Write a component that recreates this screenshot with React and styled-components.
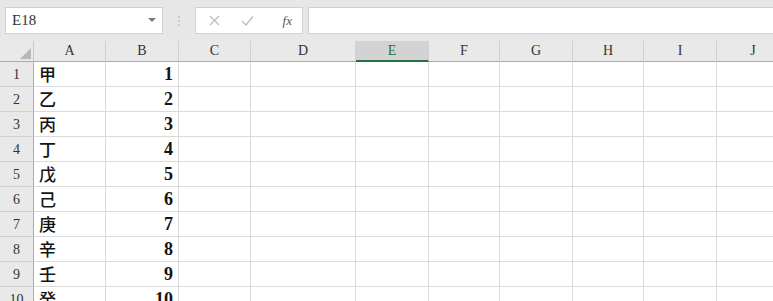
import { Fragment } from 'react'
import styled, { createGlobalStyle } from 'styled-components'

const GlobalStyle = createGlobalStyle`
  html, body {
    margin: 0;
    padding: 0;
    background: #ffffff;
    overflow: hidden;
  }
`

const columns = [
  { name: 'A', width: 72 },
  { name: 'B', width: 73 },
  { name: 'C', width: 72 },
  { name: 'D', width: 105 },
  { name: 'E', width: 73 },
  { name: 'F', width: 71 },
  { name: 'G', width: 73 },
  { name: 'H', width: 71 },
  { name: 'I', width: 73 },
  { name: 'J', width: 73 }
]

const stems = ['甲', '乙', '丙', '丁', '戊', '己', '庚', '辛', '壬', '癸']

const gridTemplate = `34px ${columns.map(c => `${c.width}px`).join(' ')}`

const Page = styled.div`
  width: 773px;
  height: 301px;
  overflow: hidden;
  display: flex;
  flex-direction: column;
`

const Toolbar = styled.div`
  background: #e7e7e7;
  height: 41px;
  display: flex;
  align-items: flex-start;
  padding: 7px 0 0 5px;
  box-sizing: border-box;
  flex-shrink: 0;
`

const NameBox = styled.div`
  width: 158px;
  height: 27px;
  box-sizing: border-box;
  background: #ffffff;
  border: 1px solid #d0d0d0;
  display: flex;
  align-items: center;
  justify-content: space-between;
  padding: 0 6px 0 6px;
  font-family: "Liberation Serif", serif;
  font-size: 15px;
  color: #333;
`

const Caret = styled.span`
  width: 0;
  height: 0;
  border-left: 4px solid transparent;
  border-right: 4px solid transparent;
  border-top: 4px solid #7a7a7a;
  margin-top: -2px;
`

const Divider = styled.div`
  width: 32px;
  height: 27px;
  display: flex;
  align-items: center;
  justify-content: center;
  color: #b4b4b4;
  font-family: "DejaVu Sans", sans-serif;
  font-size: 13px;
`

const FormulaButtons = styled.div`
  width: 108px;
  height: 27px;
  box-sizing: border-box;
  background: #ffffff;
  border: 1px solid #d0d0d0;
  display: flex;
  align-items: center;
  padding: 0 8px 0 12px;
`

const ToolIcon = styled.span`
  width: ${({ $w }) => $w}px;
  display: flex;
  align-items: center;
  justify-content: ${({ $end }) => ($end ? 'flex-end' : 'center')};
`

const Fx = styled.span`
  font-family: "Liberation Serif", serif;
  font-style: italic;
  font-size: 13px;
  color: #555;
  margin-left: auto;
  margin-right: 2px;
`

const FormulaInput = styled.div`
  flex: 1;
  height: 27px;
  margin-left: 5px;
  box-sizing: border-box;
  background: #ffffff;
  border: 1px solid #d0d0d0;
  border-right: none;
`

const Sheet = styled.div`
  display: grid;
  grid-template-columns: ${gridTemplate};
  grid-template-rows: 21px;
  grid-auto-rows: 25px;
`

const Corner = styled.div`
  background: #e9e9e9;
  border-right: 1px solid #c8c8c8;
  border-bottom: 1px solid #ababab;
  box-sizing: border-box;
  display: flex;
  align-items: flex-end;
  justify-content: flex-end;
  padding: 0 2px 2px 0;
`

const ColHeader = styled.div`
  background: ${({ $active }) => ($active ? '#d3d3d3' : '#e9e9e9')};
  border-right: 1px solid #d0d0d0;
  border-bottom: ${({ $active }) => ($active ? '2px solid #217346' : '1px solid #ababab')};
  box-sizing: border-box;
  display: flex;
  align-items: center;
  justify-content: center;
  padding-top: ${({ $active }) => ($active ? '1px' : '0')};
  font-family: "Liberation Serif", serif;
  font-size: 14px;
  color: ${({ $active }) => ($active ? '#217346' : '#333')};
`

const RowHeader = styled.div`
  background: #e9e9e9;
  border-right: 1px solid #ababab;
  border-bottom: 1px solid #d0d0d0;
  box-sizing: border-box;
  display: flex;
  align-items: flex-end;
  justify-content: center;
  padding-bottom: 3px;
  font-family: "Liberation Serif", serif;
  font-size: 14px;
  color: #333;
`

const Cell = styled.div`
  border-right: 1px solid #dadada;
  border-bottom: 1px solid #dadada;
  box-sizing: border-box;
  display: flex;
  align-items: flex-end;
  justify-content: ${({ $align }) => ($align === 'right' ? 'flex-end' : 'flex-start')};
  padding: 0 5px 1px 5px;
  color: #141414;
  overflow: hidden;
`

const Stem = styled.span`
  font-family: "Noto Sans CJK SC", sans-serif;
  font-size: 17px;
  font-weight: 500;
  line-height: 22px;
`

const Num = styled.span`
  font-family: "Liberation Serif", serif;
  font-weight: bold;
  font-size: 18px;
  line-height: 22px;
`

function CrossIcon() {
  return (
    <svg width="11" height="11" viewBox="0 0 11 11">
      <path d="M1 1 L10 10 M10 1 L1 10" stroke="#bdbdbd" strokeWidth="1.3" fill="none" />
    </svg>
  )
}

function CheckIcon() {
  return (
    <svg width="13" height="11" viewBox="0 0 13 11">
      <path d="M1 6 L5 10 L12 1.5" stroke="#bdbdbd" strokeWidth="1.4" fill="none" />
    </svg>
  )
}

function CornerTriangle() {
  return (
    <svg width="11" height="11" viewBox="0 0 11 11">
      <path d="M11 0 L11 11 L0 11 Z" fill="#b8b8b8" />
    </svg>
  )
}

export default function App() {
  return (
    <Page>
      <GlobalStyle />
      <Toolbar>
        <NameBox>
          <span>E18</span>
          <Caret />
        </NameBox>
        <Divider>⋮</Divider>
        <FormulaButtons>
          <ToolIcon $w={12}><CrossIcon /></ToolIcon>
          <ToolIcon $w={34} $end><CheckIcon /></ToolIcon>
          <Fx>fx</Fx>
        </FormulaButtons>
        <FormulaInput />
      </Toolbar>
      <Sheet>
        <Corner><CornerTriangle /></Corner>
        {columns.map(c => (
          <ColHeader key={c.name} $active={c.name === 'E'}>{c.name}</ColHeader>
        ))}
        {stems.map((stem, i) => (
          <Fragment key={`row${i}`}>
            <RowHeader>{i + 1}</RowHeader>
            {columns.map(c => (
              <Cell key={c.name} $align={c.name === 'B' ? 'right' : 'left'}>
                {c.name === 'A' && <Stem>{stem}</Stem>}
                {c.name === 'B' && <Num>{i + 1}</Num>}
              </Cell>
            ))}
          </Fragment>
        ))}
      </Sheet>
    </Page>
  )
}
